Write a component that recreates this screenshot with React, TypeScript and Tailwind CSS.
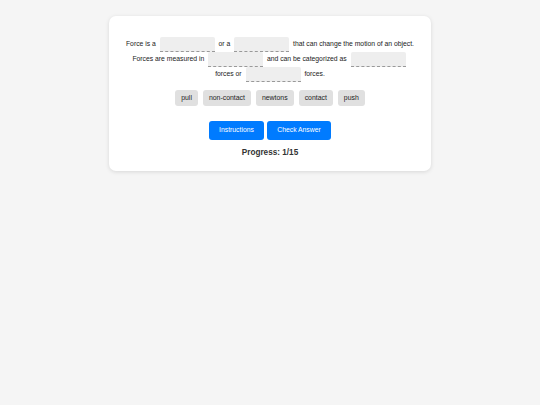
import React from 'react'

const words = ['pull', 'non-contact', 'newtons', 'contact', 'push']

function Blank() {
  return (
    <span className="inline-block w-[55px] h-[15px] mx-[2px] align-middle bg-[#eeeeee] border-b border-dashed border-[#999999] rounded-t-[2px]" />
  )
}

export default function App() {
  return (
    <div className="min-h-[405px] w-full bg-[#f5f5f5] pt-[16px] font-['Liberation_Sans',Arial,sans-serif] text-[#222]">
      <div className="mx-auto w-[322px] bg-white rounded-[7px] shadow-[0_1px_4px_rgba(0,0,0,0.12)] px-[8px] pt-[21px] pb-[12px] flex flex-col items-center">
        <p className="text-[6.8px] leading-[14.6px] text-center">
          Force is a <Blank /> or a <Blank /> that can change the motion of an object.
          <br />
          Forces are measured in <Blank /> and can be categorized as <Blank />
          <br />
          forces or <Blank /> forces.
        </p>

        <div className="flex gap-[5px] mt-[8px]">
          {words.map(w => (
            <span key={w} className="h-[16px] px-[6px] flex items-center bg-[#e0e0e0] rounded-[3px] text-[6.9px]">
              {w}
            </span>
          ))}
        </div>

        <div className="flex gap-[3px] mt-[15px]">
          <button className="h-[19px] w-[55px] bg-[#007bff] text-white text-[6.8px] rounded-[3px]">Instructions</button>
          <button className="h-[19px] w-[64px] bg-[#007bff] text-white text-[6.8px] rounded-[3px]">Check Answer</button>
        </div>

        <div className="mt-[7px] text-[8.2px] font-bold text-[#333]">Progress: 1/15</div>
      </div>
    </div>
  )
}
